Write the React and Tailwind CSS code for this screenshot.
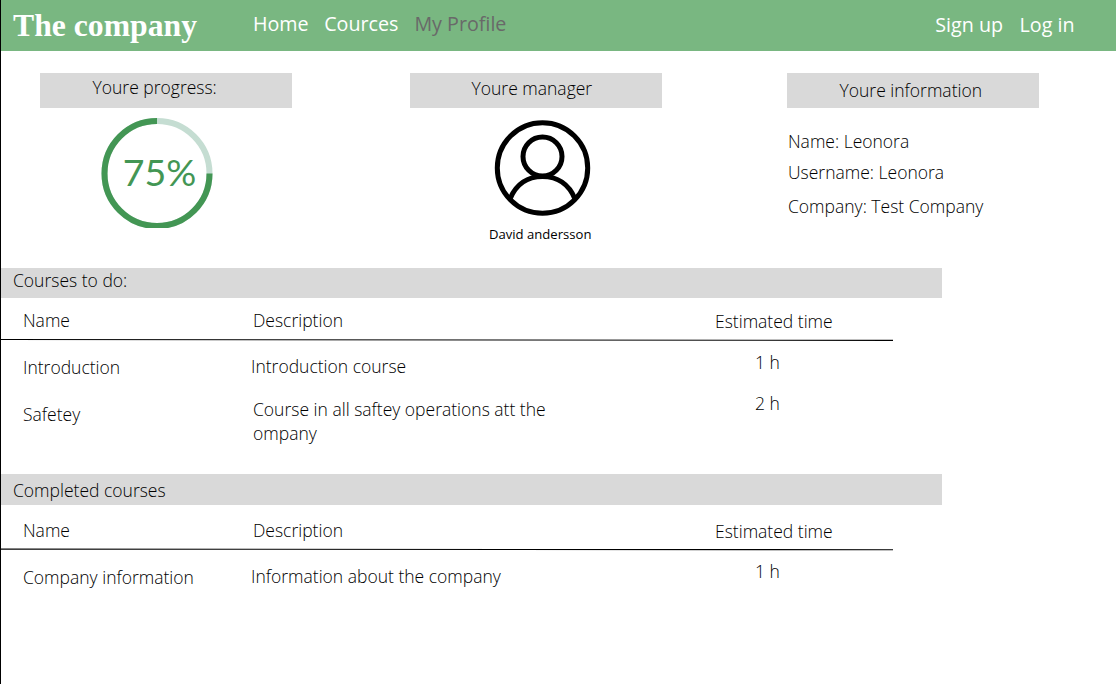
function Card({ label, c }) {
  return <div className={"h-[35px] w-[252px] bg-[#d9d9d9] leading-6 " + c}>{label}</div>;
}

function Rule({ from, to }) {
  return (
    <svg className="block" width="892" height="3" viewBox="0 0 892 3">
      <path d={`M0 ${from}L892 ${to}`} stroke="#000" strokeWidth="1.1" />
    </svg>
  );
}

function Head() {
  return (
    <div className="flex h-[40px] pt-[10px] leading-6">
      <div className="w-[230px] pl-[22px]">Name</div>
      <div className="w-[462px] pl-[22px]">Description</div>
      <div className="pl-[22px] pt-px">Estimated time</div>
    </div>
  );
}

export default function App() {
  return (
    <div className="h-[684px] w-[1116px] overflow-hidden border-l border-black bg-white font-['Open_Sans',sans-serif] text-[17.5px] font-light text-black">
      <nav className="flex h-[51px] bg-[#79b781] text-[19.7px] font-normal text-white">
        <div className="w-[252px] pl-3 pt-[6px] font-['Liberation_Serif',serif] text-[31.7px] font-bold leading-10">The company</div>
        <div className="flex flex-1 gap-[15.5px] pt-[9px] leading-[30px]">
          <span>Home</span>
          <span>Cources</span>
          <span className="pl-[0.5px] text-[#696969]">My Profile</span>
        </div>
        <div className="flex gap-[16.5px] pr-[41.5px] pt-[10px] leading-[30px]">
          <span>Sign up</span>
          <span>Log in</span>
        </div>
      </nav>
      <section className="flex h-[217px] pt-[22px]">
        <div className="w-[370px] pl-[39px]">
          <Card label="Youre progress:" c="pl-[52.5px] pt-[2px]" />
          <svg className="ml-[61px] mt-[10px]" width="112" height="110" viewBox="0 0 112 110">
            <circle cx="56" cy="55.5" r="52.5" fill="none" stroke="#c5ddd2" strokeWidth="6" />
            <path d="M56 3A52.5 52.5 0 1 0 108.5 55.5" fill="none" stroke="#439654" strokeWidth="6" />
            <text x="58.500" y="68" textAnchor="middle" fill="#439654" className="font-['Lato',sans-serif] text-[37.5px] font-normal">75%</text>
          </svg>
        </div>
        <div className="w-[377px] pl-[39px]">
          <Card label="Youre manager" c="pl-[61.5px] pt-[3px]" />
          <svg className="ml-[84px] mt-[12px]" width="97" height="97" viewBox="0 0 97 97" fill="none" stroke="#000" strokeWidth="5">
            <circle cx="48.5" cy="48" r="45.2" />
            <circle cx="48.5" cy="36.5" r="19.5" />
            <path d="M16 79C22 64 34 56.500 48.500 56.500S75 64 81 79" />
          </svg>
          <div className="pl-[79px] pt-[7px] text-[13.1px] font-normal leading-5">David andersson</div>
        </div>
        <div className="pl-[39px]">
          <Card label="Youre information" c="pl-[52.5px] pt-[5px]" />
          <div className="pl-px pt-[21px] leading-6">Name: Leonora</div>
          <div className="pl-px pt-[7px] leading-6">Username: Leonora</div>
          <div className="pl-px pt-[10px] leading-6">Company: Test Company</div>
        </div>
      </section>
      <div className="h-[30px] w-[941px] bg-[#d9d9d9] pl-3 leading-6">Courses to do:</div>
      <Head />
      <Rule from={1.5} to={2.4} />
      <div className="flex h-[133px] leading-6">
        <div className="w-[250px] pl-[22px] pt-[14px]">
          <div>Introduction</div>
          <div className="pt-[23px]">Safetey</div>
        </div>
        <div className="w-[504px]">
          <div className="pt-[13px]">Introduction course</div>
          <div className="pl-[2px] pt-[19px]">Course in all saftey operations att the<br />ompany</div>
        </div>
        <div>
          <div className="pt-[9px]">1 h</div>
          <div className="pt-[17px]">2 h</div>
        </div>
      </div>
      <div className="h-[31px] w-[941px] bg-[#d9d9d9] pl-3 pt-[4px] leading-6">Completed courses</div>
      <div className="pt-[3px]"><Head /></div>
      <Rule from={1.1} to={1.7} />
      <div className="flex leading-6">
        <div className="w-[250px] pl-[22px] pt-[14px]">Company information</div>
        <div className="w-[504px] pt-[13px]">Information about the company</div>
        <div className="pt-[8px]">1 h</div>
      </div>
    </div>
  );
}
